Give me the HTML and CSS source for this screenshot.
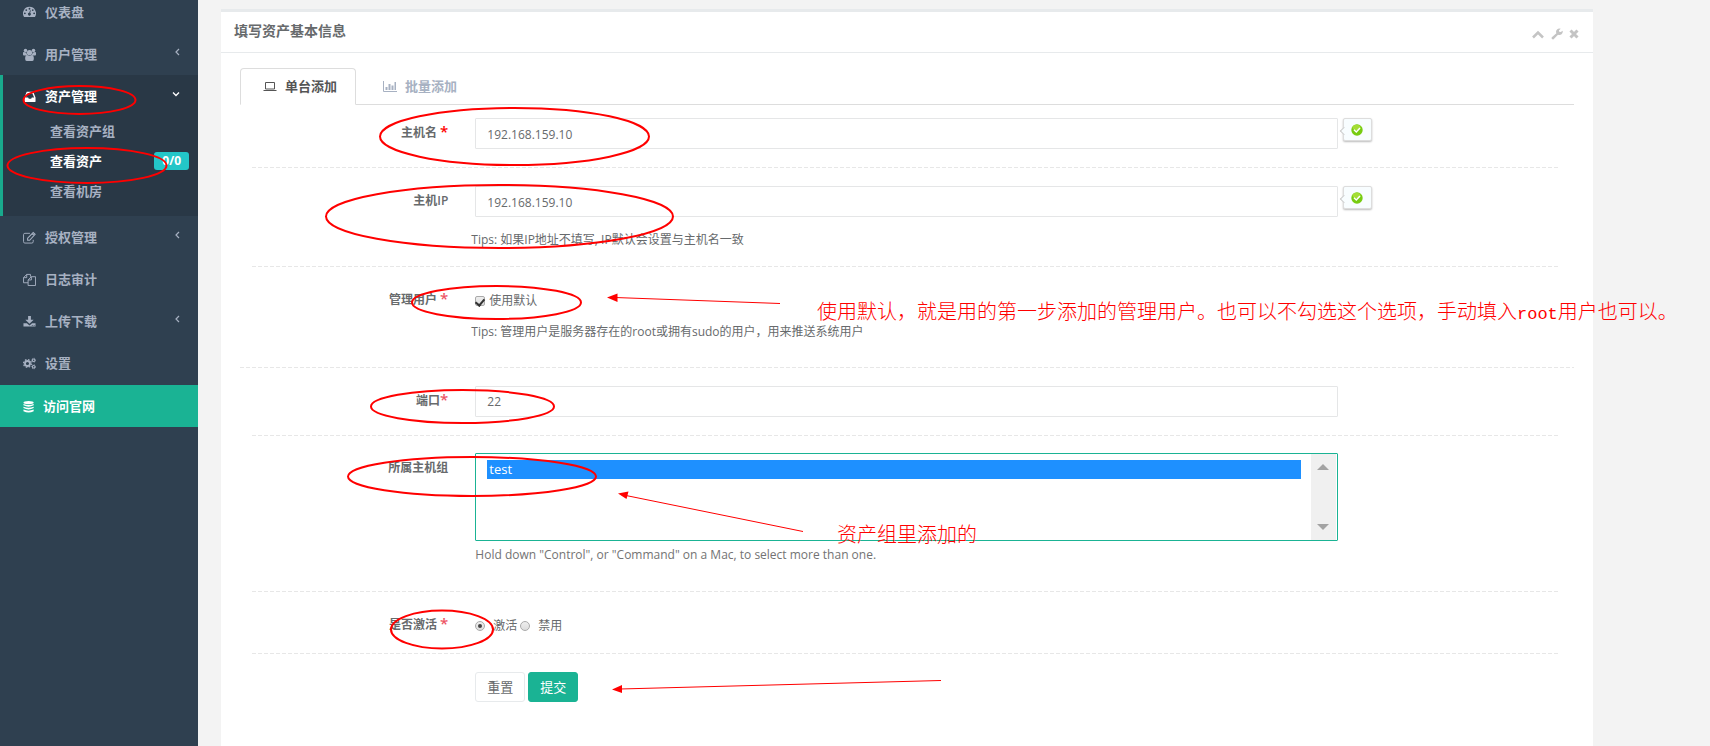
FILE: index.html
```html
<!DOCTYPE html>
<html lang="zh-CN">
<head>
<meta charset="utf-8">
<title>填写资产基本信息</title>
<link rel="stylesheet" href="styles.css">
</head>
<body>
<nav class="sidebar">
  <ul class="menu">
    <li class="menu-item menu-item-first"><a class="menu-link" href="#">
      <svg class="icon" viewBox="0 0 14 14"><path fill="currentColor" fill-rule="evenodd" d="M7 2a7 7 0 0 0-6 10.600q.2.400.6.400h10.800q.4 0 .6-.4A7 7 0 0 0 7 2zM7 3a1 1 0 1 1 0 2 1 1 0 0 1 0-2zM3.500 4.500a1 1 0 1 1 0 2 1 1 0 0 1 0-2zM10.500 4.500a1 1 0 1 1 0 2 1 1 0 0 1 0-2zM2 8a1 1 0 1 1 0 2 1 1 0 0 1 0-2zM12 8a1 1 0 1 1 0 2 1 1 0 0 1 0-2zM7.600 5.600l.8.200-.7 2.700a1.500 1.500 0 1 1-.9-.200z"/></svg>
      <span>仪表盘</span></a></li>
    <li class="menu-item"><a class="menu-link" href="#">
      <svg class="icon" viewBox="0 0 14 14"><g fill="currentColor"><circle cx="2.700" cy="2.600" r="1.900"/><circle cx="11.300" cy="2.600" r="1.900"/><circle cx="7" cy="5" r="2.800"/><path d="M0 7V5.500Q0 4 1.300 4.400q1.200.800 2.400.200Q3.500 6 4.600 7.300L3 8H1Q0 8 0 7zM14 7V5.500Q14 4 12.700 4.400q-1.200.8-2.400.2Q10.500 6 9.400 7.300L11 8h2q1 0 1-1zM2.300 11.500q0-4 2.300-4 2.400 1.700 4.800 0 2.300 0 2.300 4Q11.700 14 10 14H4q-1.700 0-1.700-2.500z"/></g></svg>
      <span>用户管理</span>
      <svg class="arrow" viewBox="0 0 10 10"><path d="M8 2 5 5 8 8" fill="none" stroke="currentColor" stroke-width="1.200"/></svg></a></li>
    <li class="menu-item menu-item-active"><a class="menu-link" href="#">
      <svg class="icon" viewBox="0 0 14 14"><path fill="currentColor" fill-rule="evenodd" d="M4 2h7l2.500 6v4.500q0 .5-.5.500H2q-.5 0-.5-.5V8zM5 3.500 3 8h2.500l.8 1.500h2.500L9.500 8H12l-2-4.500z"/></svg>
      <span>资产管理</span>
      <svg class="arrow" viewBox="0 0 10 10"><path d="M2 3.500l3 3 3-3" fill="none" stroke="currentColor" stroke-width="1.300"/></svg></a>
      <ul class="submenu">
        <li><a class="submenu-link" href="#">查看资产组</a></li>
        <li><a class="submenu-link submenu-link-current" href="#">查看资产 <span class="badge">0/0</span></a></li>
        <li><a class="submenu-link" href="#">查看机房</a></li>
      </ul></li>
    <li class="menu-item"><a class="menu-link" href="#">
      <svg class="icon" viewBox="0 0 14 14"><path d="M7.500 2.500H2Q.6 2.500.6 4v7.500Q.6 13 2 13h7.500q1.500 0 1.500-1.500V9.500" fill="none" stroke="currentColor"/><path fill="none" stroke="currentColor" stroke-width="1.200" d="M5 10V7.700L11 1.600 13 3.600 7.200 10zM10 2.800l2 2"/></svg>
      <span>授权管理</span>
      <svg class="arrow" viewBox="0 0 10 10"><path d="M8 2 5 5 8 8" fill="none" stroke="currentColor" stroke-width="1.200"/></svg></a></li>
    <li class="menu-item"><a class="menu-link" href="#">
      <svg class="icon" viewBox="0 0 14 14"><path d="M8 4V1.500H4L.6 5v5.500H5.500M4 1.500V5H.6M5.500 7.500 9 4h4.500v9.500h-8zM9 4v3.500H5.500" fill="none" stroke="currentColor"/></svg>
      <span>日志审计</span></a></li>
    <li class="menu-item"><a class="menu-link" href="#">
      <svg class="icon" viewBox="0 0 14 14"><path fill="currentColor" fill-rule="evenodd" d="M5.500 1h3v4H11.500L7 9.300 2.500 5h3zM.5 9h3.700L7 11.200 9.800 9h3.700v3.500H.5zM9.500 10.700v.9h1v-.9zM11.500 10.700v.9h1v-.9z"/></svg>
      <span>上传下载</span>
      <svg class="arrow" viewBox="0 0 10 10"><path d="M8 2 5 5 8 8" fill="none" stroke="currentColor" stroke-width="1.200"/></svg></a></li>
    <li class="menu-item"><a class="menu-link" href="#">
      <svg class="icon" viewBox="0 0 14 14"><g fill="none" stroke="currentColor"><circle cx="4.800" cy="7" r="2.700" stroke-width="2"/><circle cx="4.800" cy="7" r="4.200" stroke-width="1.400" stroke-dasharray="1.700 1.600"/><circle cx="11.500" cy="3.500" r="1.400" stroke-width="1.200"/><circle cx="11.500" cy="3.500" r="2.200" stroke-width=".8" stroke-dasharray="1 .97"/><circle cx="11.500" cy="10.500" r="1.400" stroke-width="1.200"/><circle cx="11.500" cy="10.500" r="2.200" stroke-width=".8" stroke-dasharray="1 .97"/></g></svg>
      <span>设置</span></a></li>
    <li class="menu-item menu-item-special"><a class="menu-link" href="#">
      <svg class="icon" viewBox="0 0 14 14"><g fill="currentColor"><ellipse cx="6" cy="2.800" rx="5.500" ry="1.800"/><path d="M.5 4.200q5.500 2.500 11 0v1.500q-5.500 3-11 0zM.5 7.200q5.500 2.500 11 0v1.500q-5.500 3-11 0zM.5 10.200q5.500 2.500 11 0v1.800q-5.500 3-11 0z"/></g></svg>
      <span>访问官网</span></a></li>
  </ul>
</nav>

<main class="content">
  <section class="panel">
    <header class="panel-header">
      <h1 class="panel-title">填写资产基本信息</h1>
      <div class="panel-tools">
        <button class="tool" type="button" aria-label="收起"><svg class="tool-icon" viewBox="0 0 12 12"><path d="M1 9.500 6 4.500 11 9.500" fill="none" stroke="currentColor" stroke-width="2.500"/></svg></button>
        <button class="tool" type="button" aria-label="设置"><svg class="tool-icon" viewBox="0 0 12 12"><path fill="currentColor" d="M.8 9.300 5.400 5.200A3.300 3.300 0 0 1 9.800.800L8 2.200l.2 1.600 1.600.3L11.600 2.800A3.300 3.300 0 0 1 7 6.700L2.600 11.300Q1.800 11.900 1 11.100.2 10.200.8 9.300z"/></svg></button>
        <button class="tool tool-close" type="button" aria-label="关闭"><svg class="tool-icon" viewBox="0 0 12 12"><path d="M2.500 2.500l7 7M9.500 2.500l-7 7" stroke="currentColor" stroke-width="3"/></svg></button>
      </div>
    </header>
    <div class="panel-body">
      <div class="tabs">
        <a class="tab tab-active" href="#"><svg class="tab-icon" viewBox="0 0 14 14"><path d="M2.500 3.500h9v6.500h-9zM.5 11.500h13" fill="none" stroke="currentColor"/></svg>单台添加</a>
        <a class="tab" href="#"><svg class="tab-icon" viewBox="0 0 14 14"><path d="M.5 2v10.500H14" fill="none" stroke="currentColor"/><path d="M2.500 8h2v3h-2zM5.500 5h2v6h-2zM8.500 6.500h2V11h-2zM11.500 3h1.500v8h-1.500z" fill="currentColor"/></svg>批量添加</a>
      </div>
      <form class="form">
        <div class="row">
          <label class="label" for="hostname">主机名 <span class="required required-strong">*</span></label>
          <div class="field"><input class="input input-address" id="hostname" type="text" value="192.168.159.10"></div>
          <div class="status"><span class="valid"><svg class="valid-icon" viewBox="0 0 12 12"><circle cx="6" cy="6" r="5.700" fill="#7c1"/><ellipse cx="5.500" cy="3.500" rx="4" ry="2.700" fill="#a4de35"/><path d="M3 5.800 5.300 8 9 4" fill="none" stroke="#fff" stroke-width="1.500"/></svg></span></div>
        </div>
        <hr class="divider">
        <div class="row">
          <label class="label" for="ip">主机IP</label>
          <div class="field"><input class="input input-address" id="ip" type="text" value="192.168.159.10">
            <p class="tip tip-input">Tips: 如果IP地址不填写, IP默认会设置与主机名一致</p></div>
          <div class="status"><span class="valid"><svg class="valid-icon" viewBox="0 0 12 12"><circle cx="6" cy="6" r="5.700" fill="#7c1"/><ellipse cx="5.500" cy="3.500" rx="4" ry="2.700" fill="#a4de35"/><path d="M3 5.800 5.300 8 9 4" fill="none" stroke="#fff" stroke-width="1.500"/></svg></span></div>
        </div>
        <hr class="divider divider-after-tip">
        <div class="row row-spaced">
          <span class="label">管理用户 <span class="required">*</span></span>
          <div class="field"><div class="choices"><input class="check" id="use-default" type="checkbox" checked><label for="use-default">使用默认</label></div>
            <p class="tip">Tips: 管理用户是服务器存在的root或拥有sudo的用户，用来推送系统用户</p></div>
        </div>
        <hr class="divider divider-wide">
        <div class="row">
          <label class="label" for="port">端口<span class="required">*</span></label>
          <div class="field"><input class="input" id="port" type="text" value="22"></div>
        </div>
        <hr class="divider divider-tight">
        <div class="row row-spaced">
          <label class="label" for="groups">所属主机组</label>
          <div class="field">
            <div class="listbox">
              <select class="list" id="groups" multiple size="4"><option selected>test</option></select>
              <div class="scroll"><span class="scroll-up"></span><span class="scroll-down"></span></div>
            </div>
            <p class="help">Hold down "Control", or "Command" on a Mac, to select more than one.</p>
          </div>
        </div>
        <hr class="divider">
        <div class="row">
          <span class="label">是否激活 <span class="required">*</span></span>
          <div class="field"><div class="choices">
            <input class="radio" id="on" name="active" type="radio" checked><label class="radio-label" for="on">激活</label>
            <input class="radio" id="off" name="active" type="radio"><label class="radio-label" for="off">禁用</label>
          </div></div>
        </div>
        <hr class="divider divider-close">
        <div class="row">
          <div class="field field-actions"><button class="btn" type="reset">重置</button><button class="btn btn-primary" type="submit">提交</button></div>
        </div>
      </form>
    </div>
  </section>
</main>

<div class="notes">
  <svg class="marks" width="1710" height="746" viewBox="0 0 1710 746">
    <g fill="none" stroke="#f00" stroke-width="2">
      <ellipse cx="79.500" cy="100" rx="56" ry="14"/>
      <ellipse cx="87" cy="165.500" rx="79.500" ry="17.500"/>
      <ellipse cx="514.500" cy="136.500" rx="134.500" ry="28.500"/>
      <ellipse cx="499.500" cy="216.500" rx="173.500" ry="31.500"/>
      <ellipse cx="496.500" cy="302.500" rx="84.500" ry="16.500"/>
      <ellipse cx="462.500" cy="406.500" rx="91.500" ry="16.500"/>
      <ellipse cx="472" cy="476.500" rx="124" ry="19.500"/>
      <ellipse cx="442" cy="629.500" rx="51" ry="19"/>
    </g>
    <path d="M615 297.500 780 303.500M626 495.500 803 531.500M620 689 941 680.500" fill="none" stroke="#f00" stroke-width="1"/>
    <path d="M607 297.500 617.500 293.500V302zM618 493.500 628.500 491.500 626.500 499zM612 689.500 622 685V693z" fill="#f00"/>
  </svg>
  <p class="note note-user">使用默认，就是用的第一步添加的管理用户。也可以不勾选这个选项，手动填入<span class="note-latin">root</span>用户也可以。</p>
  <p class="note note-group">资产组里添加的</p>
</div>
</body>
</html>
```

FILE: styles.css
```css
* { box-sizing: border-box; }

body {
  margin: 0;
  display: flex;
  min-height: 100vh;
  position: relative;
  overflow: hidden;
  height: 100vh;
  background: #f3f3f3;
  color: #676a6c;
  font-family: "Open Sans", "Noto Sans CJK SC", sans-serif;
  font-size: 12px;
  line-height: 18px;
}

ul, p, h1 { margin: 0; padding: 0; }
ul { list-style: none; }
a { color: inherit; text-decoration: none; }
button, input, select { font: inherit; color: inherit; margin: 0; }

.sidebar {
  flex: 0 0 198px;
  background: #2f4050;
  color: #a7b1c2;
  font-size: 13px;
}

.menu-link {
  display: flex;
  align-items: center;
  gap: 9px;
  height: 42px;
  padding: 0 17px 0 23px;
  font-weight: 600;
}

.menu-item-first .menu-link {
  height: 33px;
  padding-bottom: 10px;
}

.menu-item-active {
  background: #293846;
  box-shadow: inset 3px 0 #19aa8d;
  padding-bottom: 10px;
}

.menu-item-active > .menu-link { height: 41px; padding-top: 1px; color: #fff; }
.menu-item-special { margin-top: 1px; background: #1ab394; color: #fff; }
.menu-item-special .menu-link { gap: 7px; }

.icon { width: 13px; height: 13px; }
.arrow { width: 10px; height: 10px; margin: 0 0 4px auto; }

.submenu-link {
  display: flex;
  align-items: center;
  justify-content: space-between;
  height: 30px;
  padding: 0 9px 0 50px;
  font-weight: 600;
}

.submenu-link-current { color: #fff; }

.badge {
  padding: 0 8px;
  border-radius: 3px;
  background: #23c6c8;
  color: #fff;
  font-size: 12px;
  font-weight: 700;
}

.content {
  flex: 1;
  min-width: 0;
  display: flex;
  padding: 9px 117px 0 23px;
}

.panel {
  flex: 1;
  min-width: 0;
  background: #fff;
  border-top: 3px solid #e7eaec;
}

.panel-header {
  display: flex;
  align-items: center;
  justify-content: space-between;
  height: 41px;
  padding: 0 13px 2px;
  border-bottom: 1px solid #e7eaec;
}

.panel-title { font-size: 14px; font-weight: 600; }
.panel-tools { display: flex; gap: 7px; padding-top: 6px; color: #c4c4c4; }
.tool { display: flex; padding: 0; border: 0; background: none; }
.tool-close { margin-left: -2px; }
.tool-icon { width: 12px; height: 12px; }

.panel-body { padding: 15px 16px; }

.tabs {
  display: flex;
  gap: 4px;
  margin: 0 3px;
  border-bottom: 1px solid #ddd;
}

.tab {
  display: flex;
  align-items: center;
  gap: 8px;
  height: 37px;
  margin-bottom: -1px;
  padding: 0 18px 2px 22px;
  border: 1px solid transparent;
  border-radius: 4px 4px 0 0;
  color: #a7b1c2;
  font-size: 13px;
  font-weight: 600;
}

.tab-active { border-color: #ddd #ddd #fff; background: #fff; color: #555; }
.tab-icon { width: 14px; height: 14px; }

.form { padding-top: 13px; }

.row {
  display: grid;
  grid-template-columns: minmax(0, 2fr) minmax(0, 8fr) minmax(0, 2fr);
}

.row-spaced { padding-bottom: 9px; }

.label {
  padding: 2px 12px 0 0;
  text-align: right;
  font-weight: 600;
  line-height: 26px;
}

.required { color: #ed5565; font-size: 15px; font-weight: 600; line-height: 18px; }
.required-strong { color: #f00; }

.field { padding: 0 16px 0 15px; }

.input {
  display: block;
  width: 100%;
  height: 31px;
  padding: 0 11px;
  border: 1px solid #e5e6e7;
  border-radius: 1px;
  background: #fff;
}

.input-address { padding-top: 2px; }

.tip { margin: 9px -4px 0; }
.tip-input { margin-top: 14px; }
.help { margin-top: 5px; color: #737373; }

.status { margin-left: -11px; }

.valid {
  position: relative;
  display: flex;
  align-items: center;
  justify-content: center;
  width: 29px;
  height: 23px;
  border: 1px solid #ddd;
  border-radius: 2px;
  background: #f8fdff;
  box-shadow: 0 1px 2px #bbb;
}

.valid::before {
  content: "";
  position: absolute;
  left: -3px;
  top: 9px;
  width: 5px;
  height: 5px;
  border: solid #ccc;
  border-width: 0 0 1px 1px;
  background: #f8fdff;
  transform: rotate(45deg);
}

.valid-icon { width: 12px; height: 12px; }

.divider {
  height: 1px;
  margin: 18px 17px 18px 15px;
  border: 0;
  background: repeating-linear-gradient(90deg, #e7e7e7 0 4px, transparent 4px 6px);
}

.divider-wide { margin: 17px 3px 18px; }
.divider-after-tip { margin-top: 17px; }
.divider-tight { margin-bottom: 17px; }
.divider-close { margin-top: 14px; }

.choices { display: flex; align-items: center; height: 29px; padding-top: 2px; }

.check, .radio {
  appearance: none;
  display: grid;
  place-items: center;
  width: 10px;
  height: 10px;
  border: 1px solid #aaa;
  border-radius: 2px;
  background: linear-gradient(#eee, #ddd);
}

.check { margin-right: 4px; }
.radio { border-radius: 50%; }

.check:checked::after {
  content: "";
  width: 4px;
  height: 7px;
  margin-bottom: 2px;
  border: solid #333;
  border-width: 0 2px 2px 0;
  transform: rotate(40deg);
}

.radio:checked::after {
  content: "";
  width: 4px;
  height: 4px;
  border-radius: 50%;
  background: #444;
}

.radio-label { margin: 0 3px 0 8px; }

.listbox {
  display: flex;
  height: 88px;
  padding-right: 1px;
  border: 1px solid #1ab394;
  border-radius: 1px;
}

.list {
  flex: 1;
  min-width: 0;
  padding: 6px 10px 4px 11px;
  border: 0;
  outline: 0;
  background: #fff;
  font-size: 13px;
  overflow: hidden;
}

.list option { padding: 0 2px; line-height: 19px; min-height: 19px; }

.list option:checked {
  background: #1e90ff linear-gradient(#1e90ff, #1e90ff);
  color: #fff;
  -webkit-text-fill-color: #fff;
}

.scroll {
  display: flex;
  flex-direction: column;
  align-items: center;
  justify-content: space-between;
  width: 25px;
  padding: 10px 0;
  background: #f0f0f0;
}

.scroll-up, .scroll-down { border: 6px solid transparent; }
.scroll-up { border-top: 0; border-bottom-color: #a3a3a3; }
.scroll-down { border-bottom: 0; border-top-color: #a3a3a3; }

.field-actions { grid-column: 2; display: flex; gap: 3px; }

.btn {
  width: 50px;
  height: 30px;
  padding: 0;
  border: 1px solid #e7eaec;
  border-radius: 3px;
  background: #fff;
  font-size: 13px;
}

.btn-primary { border-color: #1ab394; background: #1ab394; color: #fff; }

.notes {
  position: absolute;
  inset: 0;
  pointer-events: none;
  color: #f00;
}

.marks { position: absolute; left: 0; top: 0; }

.note {
  position: absolute;
  white-space: nowrap;
  font-family: "Noto Sans CJK SC", sans-serif;
  font-size: 20px;
  font-weight: 300;
  line-height: 24px;
}

.note-user { left: 817px; top: 299px; }
.note-group { left: 837px; top: 522px; }
.note-latin { font-family: "Liberation Mono", monospace; font-size: 17px; font-weight: 400; }
```
